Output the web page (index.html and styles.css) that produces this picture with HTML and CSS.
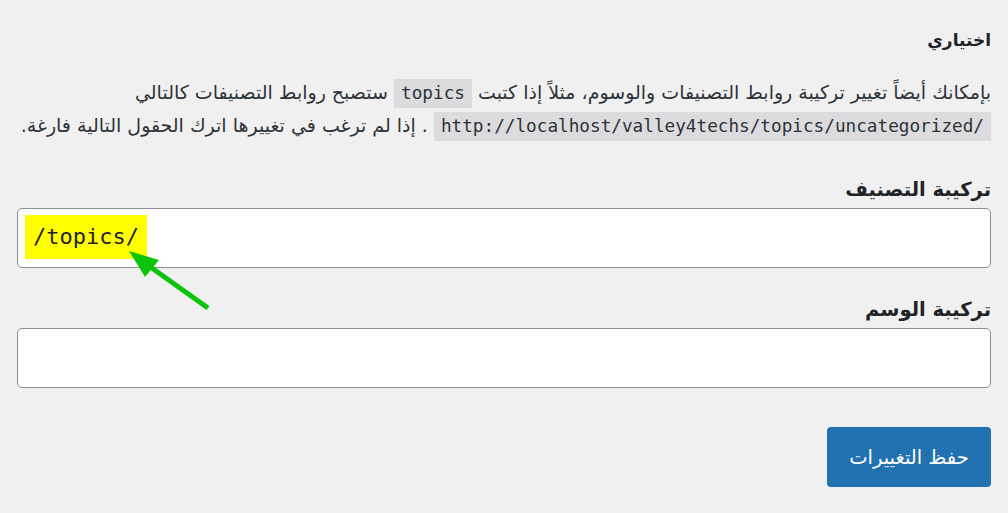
FILE: index.html
```html
<!DOCTYPE html>
<html lang="ar" dir="rtl">

<head>
    <meta charset="UTF-8">
    <meta name="viewport" content="width=device-width, initial-scale=1.0">
    <title>الروابط الدائمة</title>
    <link rel="stylesheet" href="styles.css">
</head>

<body>
    <div class="wrap">
        <h2 class="title">اختياري</h2>
        <p class="intro">
            بإمكانك أيضاً تغيير تركيبة روابط التصنيفات والوسوم، مثلاً إذا كتبت <code dir="ltr">topics</code> ستصبح روابط التصنيفات كالتالي <code dir="ltr">http://localhost/valley4techs/topics/uncategorized/</code> . إذا لم ترغب في تغييرها اترك الحقول التالية فارغة.
        </p>

        <label class="field-label" for="category_base">تركيبة التصنيف</label>
        <div class="field" id="category_base" dir="ltr">
            <span class="mark">/topics/</span>
        </div>

        <label class="field-label" for="tag_base">تركيبة الوسم</label>
        <div class="field" id="tag_base" dir="ltr"></div>

        <button class="save">حفظ التغييرات</button>

        <!-- green pointer drawn over the first field -->
        <svg class="pointer" width="100" height="80" viewBox="0 0 100 80">
            <line x1="90" y1="67" x2="24" y2="20" stroke="#0cc40c" stroke-width="5" />
            <polygon points="11,10 27,36 41,19" fill="#0cc40c" />
        </svg>
    </div>
</body>

</html>
```

FILE: styles.css
```css
* {
    margin: 0;
    padding: 0;
    box-sizing: border-box;
}

body {
    background: #f0f0f1;
    color: #1d2327;
    font-family: "DejaVu Sans", sans-serif;
}

.wrap {
    position: relative;
    padding: 28px 17px 0 17px;
}

.title {
    font-size: 17px;
    line-height: 24px;
    font-weight: bold;
}

.intro {
    margin-top: 24px;
    font-size: 19px;
    line-height: 32px;
    color: #2c3338;
}

code {
    unicode-bidi: isolate;
    font-family: "DejaVu Sans Mono", monospace;
    font-size: 17.7px;
    background: #dcdcde;
    padding: 4px 7px 5px;
    color: #2c3338;
}

.field-label {
    display: block;
    margin-top: 34px;
    font-size: 19.5px;
    line-height: 28px;
    font-weight: bold;
}

.field-label + .field + .field-label {
    margin-top: 28px;
}

.field {
    margin-top: 4px;
    height: 60px;
    background: #fff;
    border: 1px solid #8c8f94;
    border-radius: 5px;
    padding: 6px 7px;
}

.mark {
    display: inline-block;
    background: #ffff00;
    font-family: "DejaVu Sans Mono", monospace;
    font-size: 22px;
    line-height: 44px;
    padding: 0 8px;
    color: #1d2327;
}

.save {
    display: block;
    margin-top: 39px;
    width: 164px;
    height: 60px;
    background: #2271b1;
    color: #fff;
    border: none;
    border-radius: 4px;
    font-family: "DejaVu Sans", sans-serif;
    font-size: 19.5px;
    cursor: pointer;
}

.pointer {
    position: absolute;
    left: 118px;
    top: 241px;
}
```
